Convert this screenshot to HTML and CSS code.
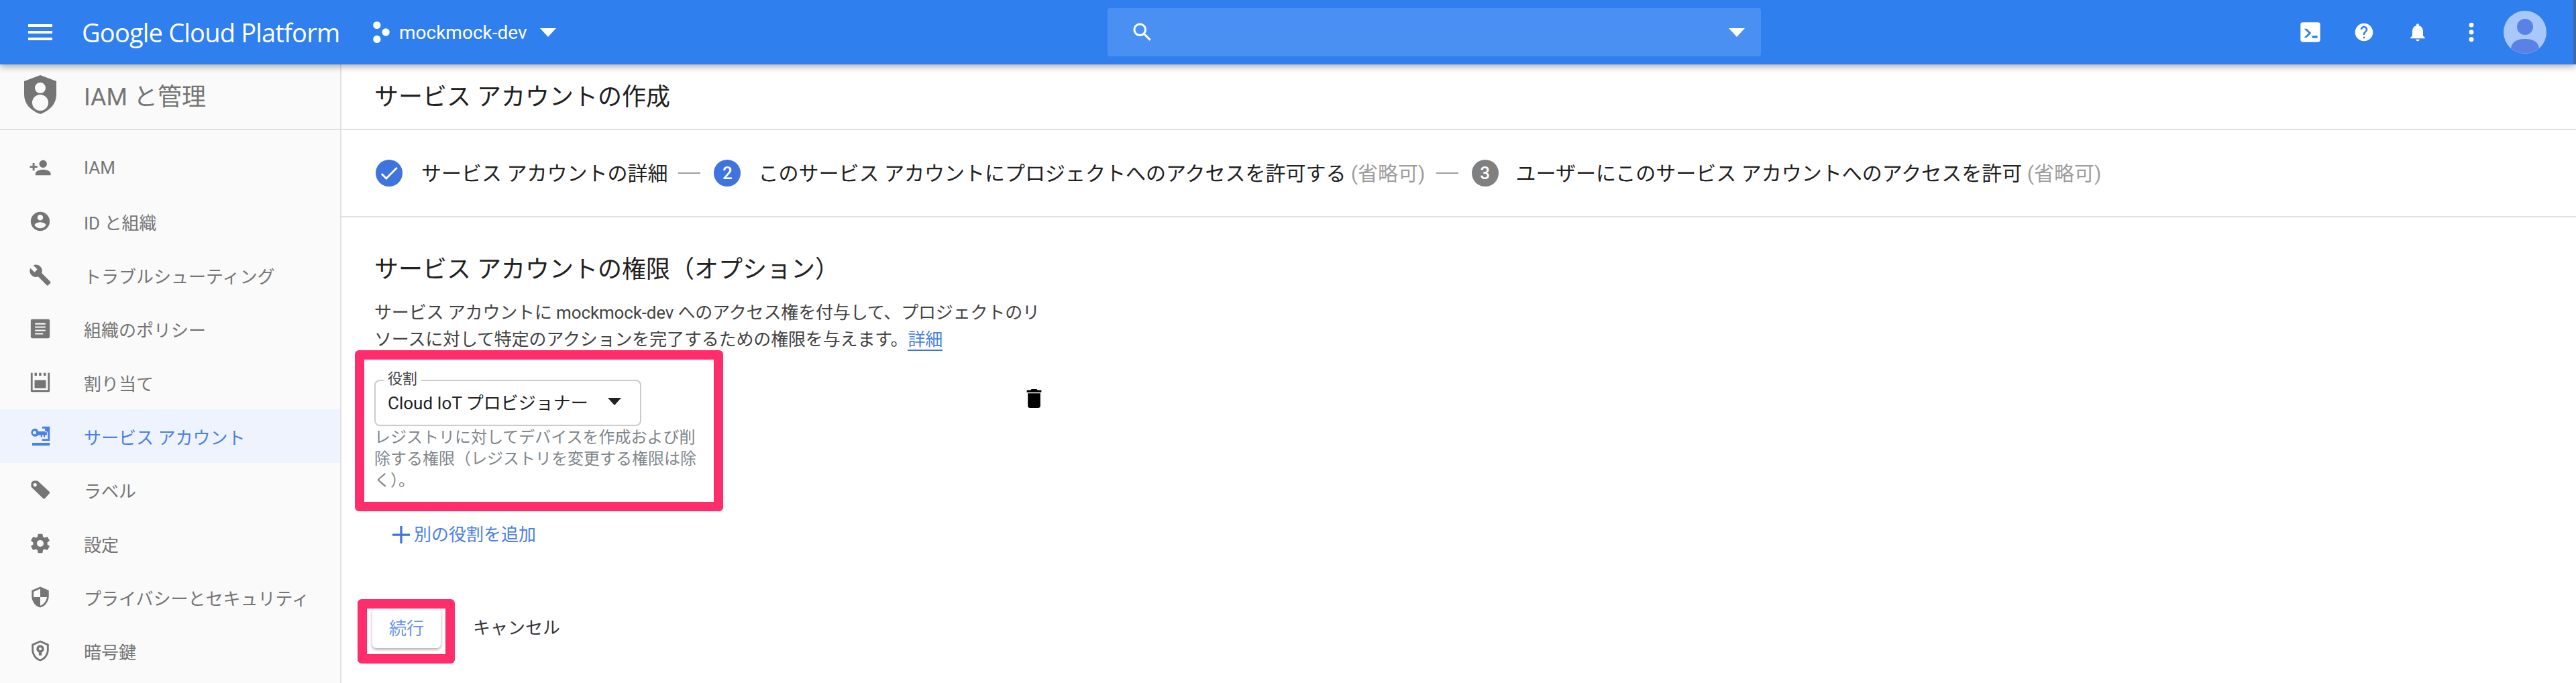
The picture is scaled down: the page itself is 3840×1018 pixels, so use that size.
FILE: index.html
```html
<!DOCTYPE html>
<html lang="ja">
<head>
  <meta charset="UTF-8">
  <title>サービス アカウントの作成</title>
  <link rel="stylesheet" href="styles.css">
</head>
<body>
  <!-- Barra superiore -->
  <header class="topbar">
    <svg class="menu-icon" viewBox="0 0 36 24"><path d="M0 0h36v4H0zM0 10h36v4H0zM0 20h36v4H0z"/></svg>
    <span class="brand">Google Cloud Platform</span>
    <div class="project">
      <svg class="project-icon" viewBox="0 0 28 36"><circle cx="7" cy="7" r="6"/><circle cx="21" cy="18" r="6"/><circle cx="7" cy="29" r="6"/></svg>
      <span class="project-name">mockmock-dev</span>
      <span class="caret"></span>
    </div>
    <div class="search">
      <svg class="search-icon" viewBox="0 0 24 24"><path d="M15.5 14h-.79l-.28-.27C15.41 12.59 16 11.11 16 9.5 16 5.91 13.09 3 9.5 3S3 5.91 3 9.5 5.91 16 9.5 16c1.61 0 3.09-.59 4.23-1.57l.27.28v.79l5 4.99L20.49 19l-4.99-5zm-6 0C7.01 14 5 11.99 5 9.5S7.01 5 9.5 5 14 7.01 14 9.5 11.99 14 9.5 14z"/></svg>
      <span class="caret"></span>
    </div>
    <div class="actions">
      <svg class="action" viewBox="0 0 24 24"><path fill-rule="evenodd" d="M3.5 1h17A2.5 2.5 0 0 1 23 3.500v17a2.500 2.500 0 0 1-2.500 2.500h-17A2.500 2.500 0 0 1 1 20.500v-17A2.500 2.500 0 0 1 3.500 1zM5 8l5 5-5 5h3l5-5-5-5zM14 16v2.500h6V16z"/></svg>
      <svg class="action" viewBox="0 0 24 24"><path d="M12 2C6.480 2 2 6.480 2 12s4.480 10 10 10 10-4.480 10-10S17.520 2 12 2zm1 17h-2v-2h2v2zm2.070-7.750l-.9.920C13.450 12.900 13 13.500 13 15h-2v-.5c0-1.100.45-2.100 1.170-2.830l1.240-1.260c.37-.36.59-.86.59-1.410 0-1.100-.9-2-2-2s-2 .9-2 2H8c0-2.210 1.790-4 4-4s4 1.790 4 4c0 .88-.36 1.680-.93 2.250z"/></svg>
      <svg class="action" viewBox="0 0 24 24"><path d="M12 22c1.100 0 2-.9 2-2h-4c0 1.100.9 2 2 2zm6-6v-5c0-3.070-1.630-5.640-4.500-6.320V4c0-.83-.67-1.500-1.500-1.500s-1.500.67-1.500 1.500v.68C7.640 5.360 6 7.920 6 11v5l-2 2v1h16v-1l-2-2z"/></svg>
      <svg class="action" viewBox="0 0 24 24"><circle cx="12" cy="4" r="2.600"/><circle cx="12" cy="12" r="2.600"/><circle cx="12" cy="20" r="2.600"/></svg>
      <svg class="avatar" viewBox="0 0 64 64"><circle cx="32" cy="32" r="32" fill="#a8c7fa"/><circle cx="32" cy="24" r="12" fill="#5a82e6"/><path d="M11 56c1-10 10-14 21-14s20 4 21 14a32 32 0 0 1-42 0z" fill="#5a82e6"/></svg>
    </div>
    <span class="edge"></span>
  </header>

  <div class="layout">
    <!-- Menu laterale -->
    <nav class="sidebar">
      <div class="side-title">
        <svg class="shield" viewBox="0 0 48 58"><path fill-rule="evenodd" d="M24 0l24 9v20c0 14-10 24-24 29C10 53 0 43 0 29V9zM24 11a8 8 0 1 0 0 16 8 8 0 0 0 0-16zM24 29a12 12 0 1 0 0 24 12 12 0 0 0 0-24z"/></svg>
        <span>IAM と管理</span>
      </div>
      <ul class="side-list">
        <li class="side-item">
          <svg class="side-icon" viewBox="0 0 24 24"><path d="M15 12c2.210 0 4-1.790 4-4s-1.790-4-4-4-4 1.790-4 4 1.790 4 4 4zm-9-2V7H4v3H1v2h3v3h2v-3h3v-2H6zm9 4c-2.670 0-8 1.340-8 4v2h16v-2c0-2.660-5.330-4-8-4z"/></svg>
          <span>IAM</span>
        </li>
        <li class="side-item">
          <svg class="side-icon" viewBox="0 0 24 24"><path d="M12 2C6.480 2 2 6.480 2 12s4.480 10 10 10 10-4.480 10-10S17.520 2 12 2zm0 3c1.660 0 3 1.340 3 3s-1.340 3-3 3-3-1.340-3-3 1.340-3 3-3zm0 14.200c-2.500 0-4.710-1.280-6-3.220.03-1.990 4-3.080 6-3.080 1.990 0 5.970 1.090 6 3.080-1.290 1.940-3.500 3.220-6 3.220z"/></svg>
          <span>ID と組織</span>
        </li>
        <li class="side-item">
          <svg class="side-icon" viewBox="0 0 24 24"><path d="M22.700 19l-9.100-9.100c.9-2.300.4-5-1.500-6.900-2-2-5-2.400-7.400-1.300L9 6 6 9 1.600 4.700C.4 7.100.9 10.100 2.900 12.100c1.900 1.900 4.600 2.400 6.900 1.500l9.100 9.100c.4.4 1 .4 1.400 0l2.300-2.300c.5-.4.5-1.100.1-1.400z"/></svg>
          <span>トラブルシューティング</span>
        </li>
        <li class="side-item">
          <svg class="side-icon" viewBox="0 0 24 24"><path fill-rule="evenodd" d="M3.500 2h17A1.500 1.500 0 0 1 22 3.500v17a1.500 1.500 0 0 1-1.500 1.500h-17A1.500 1.500 0 0 1 2 20.500v-17A1.500 1.500 0 0 1 3.500 2zM6.500 6v1.500h11V6zM6.500 9.500V11h11V9.500zM6.500 13v1.500h11V13zM6.500 16.500V18h8.500v-1.500z"/></svg>
          <span>組織のポリシー</span>
        </li>
        <li class="side-item">
          <svg class="side-icon" viewBox="0 0 24 24"><path d="M2 2h2v18h16V2h2v19a1 1 0 0 1-1 1H3a1 1 0 0 1-1-1zM6 2h2.500v3H6zM10.700 2h2.500v3h-2.500zM15.500 2H18v3h-2.500zM6 9.500h12V18H6z"/></svg>
          <span>割り当て</span>
        </li>
        <li class="side-item active">
          <svg class="side-icon" viewBox="0 0 24 24"><path fill-rule="evenodd" d="M14 2h8v15h-8v-2h6V8h-3V4h-3zM6 4a4.300 4.300 0 0 1 4 3h9v4h-2v2h-1.500v-2H14v2h-1.500v-2H10a4.300 4.300 0 1 1-4-7zm0 2.500a1.800 1.800 0 1 0 0 3.600 1.800 1.800 0 0 0 0-3.600zM3.500 19H22v3H3.500z"/></svg>
          <span>サービス アカウント</span>
        </li>
        <li class="side-item">
          <svg class="side-icon" viewBox="0 0 24 24"><path fill-rule="evenodd" d="M6 2.500h2.500a2 2 0 0 1 1.400.6L21.500 14a1.500 1.500 0 0 1 0 2.100L17 21a1.500 1.500 0 0 1-2.100 0L3 9.500a2 2 0 0 1-.6-1.400V6A3.500 3.500 0 0 1 6 2.500zM6.500 5a1.800 1.800 0 1 0 0 3.600 1.800 1.800 0 0 0 0-3.600z"/></svg>
          <span>ラベル</span>
        </li>
        <li class="side-item">
          <svg class="side-icon" viewBox="0 0 24 24"><path d="M19.430 12.980c.04-.32.07-.64.07-.98s-.03-.66-.07-.98l2.110-1.650c.19-.15.24-.42.12-.64l-2-3.460c-.12-.22-.39-.3-.61-.22l-2.490 1c-.52-.4-1.080-.73-1.690-.98l-.38-2.650C14.460 2.180 14.250 2 14 2h-4c-.25 0-.46.18-.49.42l-.38 2.650c-.61.25-1.170.59-1.690.98l-2.490-1c-.23-.09-.49 0-.61.22l-2 3.460c-.13.22-.07.49.12.64l2.110 1.650c-.04.32-.07.65-.07.98s.03.66.07.98l-2.110 1.650c-.19.15-.24.42-.12.64l2 3.460c.12.22.39.3.61.22l2.490-1c.52.4 1.080.73 1.690.98l.38 2.650c.03.24.24.42.49.42h4c.25 0 .46-.18.49-.42l.38-2.650c.61-.25 1.170-.59 1.690-.98l2.490 1c.23.09.49 0 .61-.22l2-3.460c.12-.22.07-.49-.12-.64l-2.110-1.650zM12 15.500c-1.930 0-3.500-1.570-3.500-3.500s1.570-3.500 3.500-3.500 3.500 1.570 3.500 3.500-1.570 3.500-3.500 3.500z"/></svg>
          <span>設定</span>
        </li>
        <li class="side-item">
          <svg class="side-icon" viewBox="0 0 24 24"><path d="M12 1L3 5v6c0 5.550 3.840 10.740 9 12 5.160-1.260 9-6.450 9-12V5l-9-4zm0 10.990h7c-.53 4.120-3.280 7.790-7 8.940V12H5V6.300l7-3.110v8.800z"/></svg>
          <span>プライバシーとセキュリティ</span>
        </li>
        <li class="side-item">
          <svg class="side-icon" viewBox="0 0 24 24"><path fill-rule="evenodd" d="M12 1l9 4v6c0 5.550-3.840 10.740-9 12-5.160-1.260-9-6.450-9-12V5zm0 2.200L5 6.300V11c0 4.500 3 8.800 7 9.900 4-1.100 7-5.400 7-9.900V6.300zM12 6a4 4 0 0 1 1.500 7.700V17h-3v-3.300A4 4 0 0 1 12 6zm0 2.500a1.500 1.500 0 1 0 0 3 1.500 1.500 0 0 0 0-3z"/></svg>
          <span>暗号鍵</span>
        </li>
      </ul>
    </nav>

    <!-- Contenuto principale -->
    <main class="main">
      <div class="page-title">サービス アカウントの作成</div>

      <div class="stepper">
        <span class="step-dot step-blue">
          <svg class="check" viewBox="0 0 24 24"><path d="M9 16.200L4.800 12l-1.400 1.400L9 19 21 7l-1.400-1.400z"/></svg>
        </span>
        <span class="step-text">サービス アカウントの詳細</span>
        <span class="step-dash"></span>
        <span class="step-dot step-blue">2</span>
        <span class="step-text">このサービス アカウントにプロジェクトへのアクセスを許可する <span class="optional">(省略可)</span></span>
        <span class="step-dash"></span>
        <span class="step-dot step-grey">3</span>
        <span class="step-text">ユーザーにこのサービス アカウントへのアクセスを許可 <span class="optional">(省略可)</span></span>
      </div>

      <section class="section">
        <h2 class="section-title">サービス アカウントの権限（オプション）</h2>
        <p class="section-desc">サービス アカウントに mockmock-dev へのアクセス権を付与して、プロジェクトのリソースに対して特定のアクションを完了するための権限を与えます。<a class="link">詳細</a></p>

        <div class="role-row">
          <div class="role-col">
            <div class="select">
              <span class="select-label">役割</span>
              <span>Cloud IoT プロビジョナー</span>
              <span class="caret caret-dark"></span>
            </div>
            <p class="help">レジストリに対してデバイスを作成および削除する権限（レジストリを変更する権限は除く）。</p>
          </div>
          <svg class="trash" viewBox="5 3 14 18"><path d="M6 19c0 1.100.9 2 2 2h8c1.100 0 2-.9 2-2V7H6v12zM19 4h-3.500l-1-1h-5l-1 1H5v2h14V4z"/></svg>
        </div>

        <div class="add-role">
          <svg class="plus" viewBox="0 0 24 24"><path d="M10.500 0h3v10.500H24v3H13.500V24h-3V13.500H0v-3h10.500z"/></svg>
          <span>別の役割を追加</span>
        </div>

        <div class="buttons">
          <span class="btn-primary">続行</span>
          <span class="btn-text">キャンセル</span>
        </div>
      </section>

      <!-- Riquadri di evidenziazione sopra il contenuto -->
      <div class="mark mark-role"></div>
      <div class="mark mark-btn"></div>
    </main>
  </div>
</body>
</html>
```

FILE: styles.css
```css
* {
  box-sizing: border-box;
}
html, body {
  margin: 0;
  height: 100%;
  overflow: hidden;
}
body {
  font-family: Roboto, "Noto Sans CJK JP", sans-serif;
  background-color: #fff;
  color: #212121;
}

/* Barra superiore */
.topbar {
  position: relative;
  z-index: 2;
  height: 96px;
  display: flex;
  align-items: center;
  padding-left: 42px;
  background-color: #307fee;
  color: #fff;
  fill: #fff;
  box-shadow: 0 3px 10px rgba(0, 0, 0, 0.35);
}
.menu-icon {
  width: 36px;
  height: 24px;
  flex: none;
  margin-right: 44px;
}
.brand {
  font-family: "Open Sans", sans-serif;
  font-size: 38px;
  letter-spacing: -0.8px;
  width: 433px;
  flex: none;
  white-space: nowrap;
}
.project {
  display: flex;
  align-items: center;
  width: 1096px;
  flex: none;
}
.project-icon {
  width: 27px;
  height: 34px;
  margin-right: 13px;
}
.project-name {
  font-size: 28px;
  width: 210px;
}
.caret {
  width: 0;
  height: 0;
  border-left: 12px solid transparent;
  border-right: 12px solid transparent;
  border-top: 13px solid #fff;
}
.search {
  width: 974px;
  height: 72px;
  flex: none;
  display: flex;
  align-items: center;
  justify-content: space-between;
  padding: 0 24px 0 34px;
  background-color: #4a90f2;
  border-radius: 4px;
}
.search-icon {
  width: 36px;
  height: 36px;
}
.actions {
  display: flex;
  align-items: center;
  margin-left: auto;
  margin-right: 44px;
}
.action {
  width: 32px;
  height: 32px;
  margin-right: 48px;
}
.avatar {
  width: 64px;
  height: 64px;
  margin-left: -16px;
}
.edge {
  position: absolute;
  top: 0;
  right: 0;
  width: 4px;
  height: 96px;
  background-color: #3f6aa5;
}

.layout {
  display: flex;
  height: 922px;
}

/* Menu laterale */
.sidebar {
  width: 509px;
  flex: none;
  background-color: #fafafa;
  border-right: 2px solid #e0e0e0;
  color: #757575;
  fill: #757575;
}
.side-title {
  height: 98px;
  display: flex;
  align-items: center;
  padding: 0 0 6px 36px;
  border-bottom: 2px solid #e0e0e0;
  font-size: 36px;
}
.shield {
  width: 48px;
  height: 58px;
  margin-right: 41px;
}
.side-list {
  list-style: none;
  margin: 0;
  padding: 16px 0 0;
}
.side-item {
  height: 80px;
  display: flex;
  align-items: center;
  padding-left: 43px;
  font-size: 26px;
  white-space: nowrap;
}
.side-icon {
  width: 34px;
  height: 34px;
  margin-right: 48px;
  flex: none;
}
.side-item.active {
  background-color: #eef3fd;
  color: #4a80e8;
  fill: #4a80e8;
}

/* Contenuto principale */
.main {
  position: relative;
  flex: 1;
}
.page-title {
  height: 98px;
  display: flex;
  align-items: center;
  padding: 0 0 6px 49px;
  border-bottom: 2px solid #e0e0e0;
  font-size: 36px;
}
.stepper {
  height: 130px;
  display: flex;
  align-items: center;
  padding-left: 51px;
  border-bottom: 2px solid #e0e0e0;
  font-size: 30px;
  white-space: nowrap;
}
.step-text {
  margin-bottom: 4px;
}
.step-dot {
  width: 40px;
  height: 40px;
  flex: none;
  border-radius: 50%;
  display: flex;
  align-items: center;
  justify-content: center;
  color: #fff;
  fill: #fff;
  font-size: 26px;
  font-weight: 500;
  margin-right: 28px;
}
.step-dot + .step-text + .step-dash + .step-dot {
  margin-right: 26px;
}
.step-blue {
  background-color: #3f74df;
}
.step-grey {
  background-color: #808080;
}
.check {
  width: 34px;
  height: 34px;
}
.step-dash {
  width: 33px;
  height: 2px;
  flex: none;
  background-color: #9e9e9e;
  margin: 0 20px 0 16px;
}
.optional {
  color: #9e9e9e;
}

.section {
  padding: 53px 0 0 49px;
}
.section-title {
  margin: 0;
  font-size: 36px;
  font-weight: 400;
  line-height: 50px;
}
.section-desc {
  margin: 19px 0 0;
  width: 1005px;
  font-size: 26px;
  line-height: 40px;
  letter-spacing: -0.15px;
  color: #424242;
}
.link {
  color: #4a80e8;
  border-bottom: 2px solid #3f74df;
}
.role-row {
  display: flex;
  margin-top: 40px;
}
.role-col {
  width: 480px;
}
.select {
  position: relative;
  width: 398px;
  height: 69px;
  display: flex;
  align-items: center;
  justify-content: space-between;
  padding: 0 28px 4px 18px;
  border: 2px solid #ccc;
  border-radius: 8px;
  font-size: 26px;
  white-space: nowrap;
}
.select-label {
  position: absolute;
  top: -18px;
  left: 12px;
  padding: 0 6px;
  background-color: #fff;
  font-size: 22px;
  line-height: 30px;
  color: #424242;
}
.caret-dark {
  border-left-width: 10px;
  border-right-width: 10px;
  border-top: 11px solid #212121;
}
.help {
  margin: 1px 0 0;
  font-size: 24px;
  line-height: 32px;
  color: #80868b;
}
.trash {
  width: 25px;
  height: 28px;
  margin: 14px 0 0 491px;
  fill: #000;
}
.add-role {
  display: flex;
  align-items: center;
  margin: 45px 0 0 27px;
  font-size: 26px;
  line-height: 40px;
  color: #4a80e8;
  fill: #3f74df;
}
.plus {
  width: 26px;
  height: 26px;
  margin-right: 6px;
}
.buttons {
  display: flex;
  align-items: center;
  margin-top: 89px;
}
.btn-primary {
  width: 102px;
  height: 60px;
  margin-left: -3px;
  padding-bottom: 3px;
  display: flex;
  align-items: center;
  justify-content: center;
  border-radius: 6px;
  background-color: #fff;
  box-shadow: 0 2px 4px rgba(0, 0, 0, 0.35);
  font-size: 26px;
  color: #7094e6;
}
.btn-text {
  margin: 0 0 5px 48px;
  font-size: 26px;
  color: #333;
}

/* Riquadri rosa */
.mark {
  position: absolute;
  border: 14px solid #ff2d6b;
  border-radius: 6px;
}
.mark-role {
  left: 20px;
  top: 426px;
  width: 549px;
  height: 240px;
}
.mark-btn {
  left: 24px;
  top: 797px;
  width: 145px;
  height: 96px;
}
```
